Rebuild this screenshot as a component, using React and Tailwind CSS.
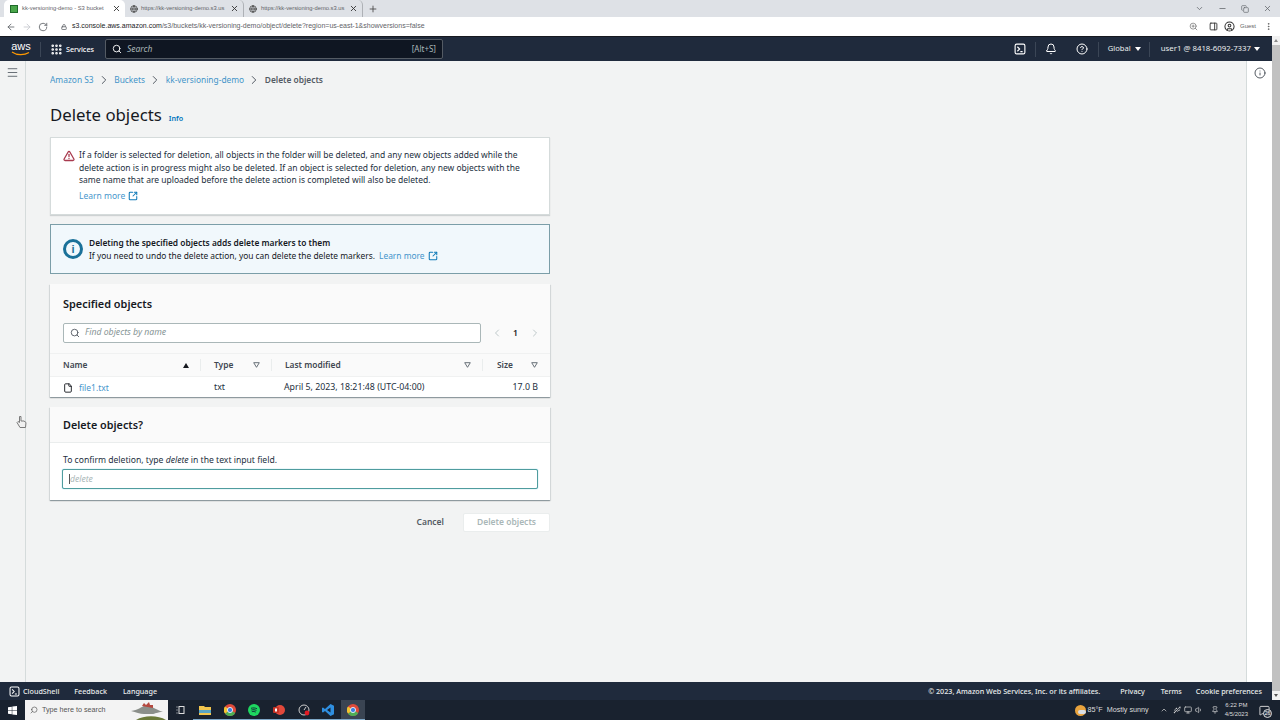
import React from "react";
import { Search, ArrowLeft, ArrowRight, RotateCw, Lock, X, Plus, ChevronDown, Minus, Copy, ZoomIn, PanelRight, CircleUser, Grip, Bell, CircleHelp, Menu, Info, ChevronRight, ChevronLeft, File, TriangleAlert, SquareArrowOutUpRight, Globe, EllipsisVertical, ChevronUp, Volume1, Monitor, Usb, MessageSquare, Pin } from "lucide-react";

const font = { fontFamily: '"Noto Sans", sans-serif' };

function Tab({ active, title, children, cls = "" }) {
  return (
    <div className={"flex items-center h-[17px] shrink-0 rounded-t-[5px] " + (active ? "bg-white " : "") + cls}>
      {children}
      <span className="text-[5.8px] text-[#5f6368] whitespace-nowrap flex-1 font-['Liberation_Sans',sans-serif]">{title}</span>
      <X size={9} strokeWidth={2.4} className="text-[#333] shrink-0" />
    </div>
  );
}

function Term({ size = 14, cls = "" }) {
  return (
    <svg width={size} height={size} viewBox="0 0 16 16" fill="none" stroke="currentColor" strokeWidth="1.5" className={cls}>
      <rect x="1.5" y="1.5" width="13" height="13" rx="2" />
      <path d="M4.500 5l3 3-3 3M8.500 11.500h3" />
    </svg>
  );
}

function NavDiv({ cls = "" }) {
  return <div className={"w-px h-[15px] bg-[#3b4656] shrink-0 " + cls} />;
}

function Caret({ cls = "" }) {
  return <span className={"inline-block w-0 h-0 border-l-[3px] border-r-[3px] border-t-[4px] border-l-transparent border-r-transparent border-t-white " + cls} />;
}

function SortDown() {
  return <svg width="7" height="6" viewBox="0 0 7 6" className="block shrink-0"><path d="M.7.7h5.600L3.500 5.300z" fill="none" stroke="#687078" strokeWidth="1" /></svg>;
}

function Crumb({ children }) {
  return <span className="text-[#0073bb] opacity-75">{children}</span>;
}

function Chev() {
  return <ChevronRight size={14} strokeWidth={1.7} className="text-[#545b64] mx-[3.3px] shrink-0" />;
}

function Ext() {
  return <SquareArrowOutUpRight size={10} strokeWidth={2.5} className="text-[#0f7ab8] shrink-0" />;
}

function ChromeLogo() {
  return (
    <svg width="12" height="12" viewBox="0 0 12 12">
      <circle cx="6" cy="6" r="6" fill="#e04a3a" />
      <path d="M6 6L11.200 9A6 6 0 0 1 1 9.500z" fill="#4fae55" />
      <path d="M6 6L1 9.500A6 6 0 0 1 1 2.500z" fill="#f2c430" />
      <circle cx="6" cy="6" r="2.600" fill="#3f7fe0" stroke="#fff" strokeWidth=".8" />
    </svg>
  );
}

const tb = "h-[20px] w-[24.6px] flex items-center justify-center shrink-0 border-b border-[#7fa9c9]";

export default function App() {
  return (
    <div className="w-[1280px] h-[720px] flex flex-col overflow-hidden bg-white text-[#16191f] relative" style={font}>
      {/* tab strip */}
      <div className="h-[17px] bg-[#dee1e6] flex items-center shrink-0 pl-[4px]">
        <Tab active title="kk-versioning-demo - S3 bucket" cls="w-[121px] pl-[6px] pr-[4.5px] gap-[4px]">
          <span className="w-[8px] h-[8px] bg-[#4aa64a] border border-[#1f6a2a] shrink-0" />
        </Tab>
        <Tab title="https://kk-versioning-demo.s3.us" cls="w-[119px] pl-[5px] pr-[4.5px] gap-[3px] border-r border-[#aeb1b6]"><Globe size={8} strokeWidth={2.4} className="text-[#444] shrink-0" /></Tab>
        <Tab title="https://kk-versioning-demo.s3.us" cls="w-[119px] pl-[5px] pr-[4.5px] gap-[4px] border-r border-[#aeb1b6]"><Globe size={8} strokeWidth={2.4} className="text-[#444] shrink-0" /></Tab>
        <Plus size={10} strokeWidth={2} className="text-[#444] ml-[5px]" />
        <div className="flex-1" />
        <div className="flex items-center gap-[14px] pr-[8px] text-[#5f6368]">
          <ChevronDown size={9} />
          <Minus size={9} />
          <Copy size={8} />
          <X size={9} />
        </div>
      </div>
      {/* url bar */}
      <div className="h-[19px] bg-white flex items-center pl-[6px] pr-[7px] shrink-0">
        <ArrowLeft size={10} strokeWidth={2} className="text-[#5f6368]" />
        <ArrowRight size={10} strokeWidth={2} className="text-[#c4c7cc] ml-[6px]" />
        <RotateCw size={10} strokeWidth={2} className="text-[#5f6368] ml-[6px]" />
        <Lock size={6} strokeWidth={3} className="text-[#5f6368] ml-[13px]" />
        <span className="text-[7px] text-[#5f6368] ml-[5px] font-['Liberation_Sans',sans-serif]"><span className="text-[#202124]">s3.console.aws.amazon.com</span>/s3/buckets/kk-versioning-demo/object/delete?region=us-east-1&showversions=false</span>
        <div className="flex-1" />
        <ZoomIn size={9} className="text-[#777]" />
        <PanelRight size={9} strokeWidth={2.4} className="text-[#333] ml-[11px]" />
        <CircleUser size={11} strokeWidth={2.2} className="text-[#333] ml-[6px]" />
        <span className="text-[6px] text-[#666] ml-[5px] font-['Liberation_Sans',sans-serif]">Guest</span>
        <EllipsisVertical size={9} className="text-[#555] ml-[8px]" />
      </div>
      {/* page with scrollbar */}
      <div className="flex-1 flex min-h-0">
        <div className="w-[1272px] shrink-0 flex flex-col min-h-0">
          {/* aws nav */}
          <div className="h-[25px] bg-[#1f2a3c] flex items-center shrink-0 pl-[11px] pr-[12px] text-white text-[7.6px] border-t border-[#16191f]">
            <div className="w-[20px] flex flex-col items-center leading-none">
              <span className="text-[11px] h-[9px] leading-[8px] font-['Liberation_Sans',sans-serif]">aws</span>
              <svg width="20" height="5" viewBox="0 0 20 5"><path d="M1 1c5 3.500 12 3.500 17 .5" stroke="#f90" strokeWidth="1.200" fill="none" /></svg>
            </div>
            <NavDiv cls="ml-[9px]" />
            <Grip size={13} strokeWidth={2.8} className="ml-[9px]" />
            <span className="ml-[3px] font-medium text-[7.2px]">Services</span>
            <div className="ml-[11px] w-[338px] h-[20px] bg-[#0f1622] border border-[#545b64] rounded-[2px] flex items-center px-[6px] text-[#aab7b8]">
              <Search size={10} strokeWidth={2.2} className="text-white" />
              <span className="italic ml-[5px] text-[8.5px] flex-1">Search</span>
              <span className="text-[8px]">[Alt+S]</span>
            </div>
            <div className="flex-1" />
            <Term size={12} />
            <NavDiv cls="ml-[9px]" />
            <Bell size={12} strokeWidth={2} className="ml-[9px]" />
            <CircleHelp size={12} strokeWidth={2} className="ml-[19px]" />
            <NavDiv cls="ml-[10px]" />
            <span className="ml-[9px] text-[#eaeded]">Global</span>
            <Caret cls="ml-[4px]" />
            <NavDiv cls="ml-[8px]" />
            <span className="ml-[11px] text-[#eaeded] text-[7.8px]">user1 @ 8418-6092-7337</span>
            <Caret cls="ml-[3px]" />
          </div>
          {/* body */}
          <div className="flex-1 flex min-h-0">
            <div className="w-[26px] shrink-0 bg-[#f2f3f3] border-r border-[#d5dbdb] pt-[5px] pl-[6px]">
              <Menu size={13} strokeWidth={1.6} className="text-[#545b64]" />
            </div>
            <main className="flex-1 bg-[#f2f3f3] min-w-0 pl-[24px] flex flex-col">
              <div className="flex items-center h-[12px] mt-[13px] text-[8.4px] w-[500px]">
                <Crumb>Amazon S3</Crumb><Chev />
                <Crumb>Buckets</Crumb><Chev />
                <Crumb>kk-versioning-demo</Crumb><Chev />
                <span className="font-semibold text-[#545b64]">Delete objects</span>
              </div>
              <div className="flex items-baseline mt-[16px] h-[26px] w-[500px]">
                <h1 className="text-[16.8px] leading-[26px] text-[#16191f]">Delete objects</h1>
                <span className="ml-[7px] text-[7.2px] font-semibold text-[#0073bb]">Info</span>
              </div>
              {/* warning */}
              <div className="w-[500px] h-[78px] mt-[9px] bg-white border border-[#d5dbdb] shadow-[0_1px_1px_rgba(0,28,36,0.15)] flex pl-[12px] pt-[11px]">
                <TriangleAlert size={12} strokeWidth={2.6} className="text-[#a83a4e] mt-[1px] shrink-0" />
                <div className="ml-[4px] text-[8.5px] leading-[12.5px] text-[#232f3e] w-[445px]">
                  <p>If a folder is selected for deletion, all objects in the folder will be deleted, and any new objects added while the delete action is in progress might also be deleted. If an object is selected for deletion, any new objects with the same name that are uploaded before the delete action is completed will also be deleted.</p>
                  <p className="mt-[3px] flex items-center gap-[3px] text-[#0073bb]"><span className="opacity-75">Learn more</span> <Ext /></p>
                </div>
              </div>
              {/* info */}
              <div className="w-[500px] h-[50px] mt-[9px] bg-[#f1f8fc] border border-[#7b9ea8] flex items-center pl-[12px]">
                <div className="w-[20px] h-[20px] rounded-full border-[3px] border-[#1a7199] flex items-center justify-center text-[#1a7199] shrink-0">
                  <span className="text-[11px] font-bold leading-none font-['Liberation_Sans',sans-serif]">i</span>
                </div>
                <div className="ml-[6px] text-[8.4px] leading-[13px] text-[#16191f]">
                  <p className="font-semibold">Deleting the specified objects adds delete markers to them</p>
                  <p className="flex items-center gap-[3px]"><span>If you need to undo the delete action, you can delete the delete markers.</span> <span className="text-[#0073bb] opacity-75 ml-[1px]">Learn more</span> <Ext /></p>
                </div>
              </div>
              {/* table */}
              <div className="w-[500px] h-[113px] mt-[10px] bg-white shadow-[0_1px_1px_rgba(0,28,36,0.3),1px_1px_1px_rgba(0,28,36,0.08),-1px_1px_1px_rgba(0,28,36,0.08)] flex flex-col">
                <div className="h-[70px] bg-[#fafafa] pl-[13px] pt-[12px] border-b border-[#f0f1f1]">
                  <h2 className="text-[10.9px] leading-[16px] font-semibold">Specified objects</h2>
                  <div className="flex items-center mt-[11px]">
                    <div className="w-[418px] h-[20px] bg-white border border-[#aab7b8] rounded-[2px] flex items-center pl-[6px] text-[#879596]">
                      <Search size={10} strokeWidth={2.2} className="text-[#545b64]" />
                      <span className="italic ml-[5px] text-[8.7px]">Find objects by name</span>
                    </div>
                    <ChevronLeft size={12} strokeWidth={1.5} className="text-[#aab7b8] ml-[10px]" />
                    <span className="ml-[10px] text-[8.5px] font-semibold">1</span>
                    <ChevronRight size={12} strokeWidth={1.5} className="text-[#aab7b8] ml-[11px]" />
                  </div>
                </div>
                <div className="h-[23px] bg-[#fafafa] flex items-center text-[8.4px] font-semibold text-[#414750] border-b border-[#f0f1f1]">
                  <div className="w-[151px] pl-[13px] flex items-center justify-between pr-[11px] border-r border-[#eaeded] h-[12px]"><span>Name</span><span className="w-0 h-0 border-l-[3px] border-r-[3px] border-b-[5px] border-l-transparent border-r-transparent border-b-[#16191f]" /></div>
                  <div className="w-[71px] pl-[13px] flex items-center justify-between pr-[11px] border-r border-[#eaeded] h-[12px]"><span>Type</span><SortDown /></div>
                  <div className="w-[211px] pl-[13px] flex items-center justify-between pr-[11px] border-r border-[#eaeded] h-[12px]"><span>Last modified</span><SortDown /></div>
                  <div className="flex-1 pl-[14px] flex items-center justify-between pr-[12px] h-[12px]"><span>Size</span><SortDown /></div>
                </div>
                <div className="flex-1 flex items-center text-[8.8px] text-[#232f3e] pt-[2px]">
                  <div className="w-[151px] pl-[13px] flex items-center gap-[6px]"><File size={10} strokeWidth={2.2} className="text-[#16191f]" /><span className="text-[#0073bb] opacity-75 text-[8.5px]">file1.txt</span></div>
                  <div className="w-[71px] pl-[13px]">txt</div>
                  <div className="w-[211px] pl-[12px] whitespace-nowrap">April 5, 2023, 18:21:48 (UTC-04:00)</div>
                  <div className="flex-1 text-right pr-[12px]">17.0 B</div>
                </div>
              </div>
              {/* confirm */}
              <div className="w-[500px] h-[93px] mt-[10px] bg-white shadow-[0_1px_1px_rgba(0,28,36,0.3),1px_1px_1px_rgba(0,28,36,0.08),-1px_1px_1px_rgba(0,28,36,0.08)] flex flex-col">
                <div className="h-[36px] bg-[#fafafa] border-b border-[#eaeded] px-[13px] pt-[1px] flex items-center">
                  <h2 className="text-[10.8px] font-semibold">Delete objects?</h2>
                </div>
                <div className="pl-[12px] pt-[11px] text-[8.6px] leading-[12px] text-[#232f3e]">
                  <p className="pl-[1px]">To confirm deletion, type <i>delete</i> in the text input field.</p>
                  <div className="mt-[3px] w-[476px] h-[20px] bg-white border border-[#4f9c9e] rounded-[2px] shadow-[0_0_1px_#44b9d6] flex items-center pl-[6px]">
                    <span className="w-px h-[10px] bg-[#555]" />
                    <span className="italic text-[8.6px] text-[#aab7b8]">delete</span>
                  </div>
                </div>
              </div>
              {/* actions */}
              <div className="w-[500px] flex items-center justify-end mt-[13px] text-[8.5px] font-semibold">
                <span className="text-[#545b64]">Cancel</span>
                <div className="ml-[19px] w-[87px] h-[19px] bg-white border border-[#eaeded] rounded-[2px] flex items-center justify-center text-[#aab7b8]">Delete objects</div>
              </div>
            </main>
            <div className="w-[26px] shrink-0 bg-white border-l border-[#d5dbdb] pt-[6px] flex justify-center">
              <Info size={12} strokeWidth={1.8} className="text-[#414750]" />
            </div>
          </div>
          {/* footer */}
          <div className="h-[18px] bg-[#1f2a3c] flex items-center shrink-0 pl-[9px] pr-[10px] text-[7.2px] text-[#eaeded] font-medium">
            <Term size={11} cls="text-white" />
            <span className="ml-[3px]">CloudShell</span>
            <span className="ml-[15px]">Feedback</span>
            <span className="ml-[16px]">Language</span>
            <div className="flex-1" />
            <span>© 2023, Amazon Web Services, Inc. or its affiliates.</span>
            <span className="ml-[20px]">Privacy</span>
            <span className="ml-[16px]">Terms</span>
            <span className="ml-[14px]">Cookie preferences</span>
          </div>
        </div>
        {/* scrollbar */}
        <div className="w-[8px] shrink-0 bg-[#f1f1f1] flex flex-col items-center pt-[3px] pb-[3px]">
          <span className="w-0 h-0 border-l-[2px] border-r-[2px] border-b-[3px] border-l-transparent border-r-transparent border-b-[#888] shrink-0" />
          <div className="w-[8px] flex-1 bg-[#c1c1c1] mt-[3px] mb-[3px]" />
          <span className="w-0 h-0 border-l-[2px] border-r-[2px] border-t-[3px] border-l-transparent border-r-transparent border-t-[#555] shrink-0" />
        </div>
      </div>
      {/* taskbar */}
      <div className="h-[20px] bg-[#19222f] flex items-center shrink-0 text-white font-['Liberation_Sans',sans-serif]">
        <div className="w-[25px] flex justify-center shrink-0">
          <svg width="9" height="9" viewBox="0 0 9 9" fill="#fff"><path d="M0 1.200l3.800-.5v3.500H0zM4.300.6L9 0v4.200H4.300zM0 4.700h3.800v3.600L0 7.800zM4.300 4.700H9V9l-4.700-.6z" /></svg>
        </div>
        <div className="w-[143px] h-[20px] bg-[#f3f3f3] flex items-center pl-[5px] relative overflow-hidden shrink-0">
          <Search size={8} strokeWidth={2} className="text-[#555] -scale-x-100" />
          <span className="text-[7.2px] text-[#555] ml-[4px]">Type here to search</span>
          <svg width="36" height="20" viewBox="0 0 36 20" className="absolute left-[105px] top-0">
            <path d="M6 20c8-5 22-5 30 0z" fill="#6b7a3a" />
            <path d="M1 11c7-1 10-4 15-6 5 1 9 4 17 7-6 0-8 2-11 2h-8c-4 0-8-2-13-3z" fill="#8b8f8a" />
            <path d="M12 6l2-3 2 2 3-3 1 3 3 0 0 3z" fill="#b5483f" />
          </svg>
        </div>
        <div className="h-[20px] w-[25px] flex items-center justify-center shrink-0"><svg width="10" height="10" viewBox="0 0 10 10" fill="none" stroke="#ddd"><rect x="3" y="1.500" width="5" height="7" /><path d="M.5 2h1M.5 5h1M.5 8h1" /></svg></div>
        <div className={tb}><svg width="12" height="10" viewBox="0 0 12 10"><path d="M0 1h5l1 1h6v8H0z" fill="#f3c64e" /><path d="M0 5h12v3H0z" fill="#58a4c4" /></svg></div>
        <div className={tb}><ChromeLogo /></div>
        <div className={tb}><svg width="12" height="12" viewBox="0 0 12 12"><circle cx="6" cy="6" r="6" fill="#1ed760" /><path d="M3 4.300c2-.6 4.200-.5 6 .5M3.400 6c1.800-.5 3.500-.3 5 .5M3.800 7.700c1.400-.4 2.800-.2 4 .4" stroke="#123" strokeWidth=".9" fill="none" /></svg></div>
        <div className={tb}><svg width="12" height="12" viewBox="0 0 12 12"><circle cx="7" cy="6" r="5" fill="#e2483a" /><rect x="0" y="3" width="6" height="6" rx="1" fill="#c43326" /><path d="M2 4.500h2v3H2z" fill="#fff" /></svg></div>
        <div className={tb}><svg width="12" height="12" viewBox="0 0 12 12"><circle cx="6" cy="6" r="5" fill="none" stroke="#ccc" strokeWidth="1" /><path d="M6 6l2-3" stroke="#ccc" /><circle cx="9" cy="9" r="2.400" fill="#e01b24" /></svg></div>
        <div className={tb}><svg width="12" height="12" viewBox="0 0 12 12"><path d="M8.500 0L12 1.700v8.600L8.500 12 3 7l-2 1.500L0 8V4l1-.5L3 5z" fill="#2f8fe0" /><path d="M8.500 3.500L5 6l3.500 2.500z" fill="#19222f" /></svg></div>
        <div className={tb + " bg-[#3a4452]"}><ChromeLogo /></div>
        <div className="flex-1" />
        <div className="w-[11px] h-[11px] rounded-full bg-[#e8a33d] shrink-0 relative"><span className="absolute left-[3px] top-[5px] w-[8px] h-[4px] rounded-full bg-[#d9dde3]" /></div>
        <span className="text-[7.2px] ml-[1px] text-[#ddd]">85°F</span>
        <span className="text-[7.2px] ml-[4px] text-[#ddd]">Mostly sunny</span>
        <ChevronUp size={8} className="ml-[11px] text-[#ddd]" />
        <Usb size={8} className="ml-[5px] text-[#ddd]" />
        <Monitor size={8} className="ml-[3px] text-[#ddd]" />
        <Volume1 size={8} className="ml-[3px] text-[#ddd]" />
        <Pin size={8} className="ml-[8px] text-[#ddd]" />
        <div className="ml-[6px] flex flex-col items-center text-[6px] leading-[9px] text-[#ddd]">
          <span>6:22 PM</span>
          <span>4/5/2023</span>
        </div>
        <div className="ml-[11px] mr-[10px] relative">
          <MessageSquare size={11} className="text-[#ddd]" />
          <span className="absolute left-[4px] top-[4px] w-[9px] h-[9px] rounded-full bg-[#2c3644] border border-[#ddd] text-[5px] leading-[7px] text-center text-white">26</span>
        </div>
      </div>
      {/* mouse pointer over the page */}
      <svg width="11" height="14" viewBox="0 0 11 14" className="absolute left-[16px] top-[415px]">
        <path d="M3.500 1.500v6L2 6.500 1 7.500l3 5h5.500l.5-5-2-1.500H5V1.500z" fill="#f0f0f0" stroke="#7a7a7a" strokeWidth="1" />
      </svg>
    </div>
  );
}
